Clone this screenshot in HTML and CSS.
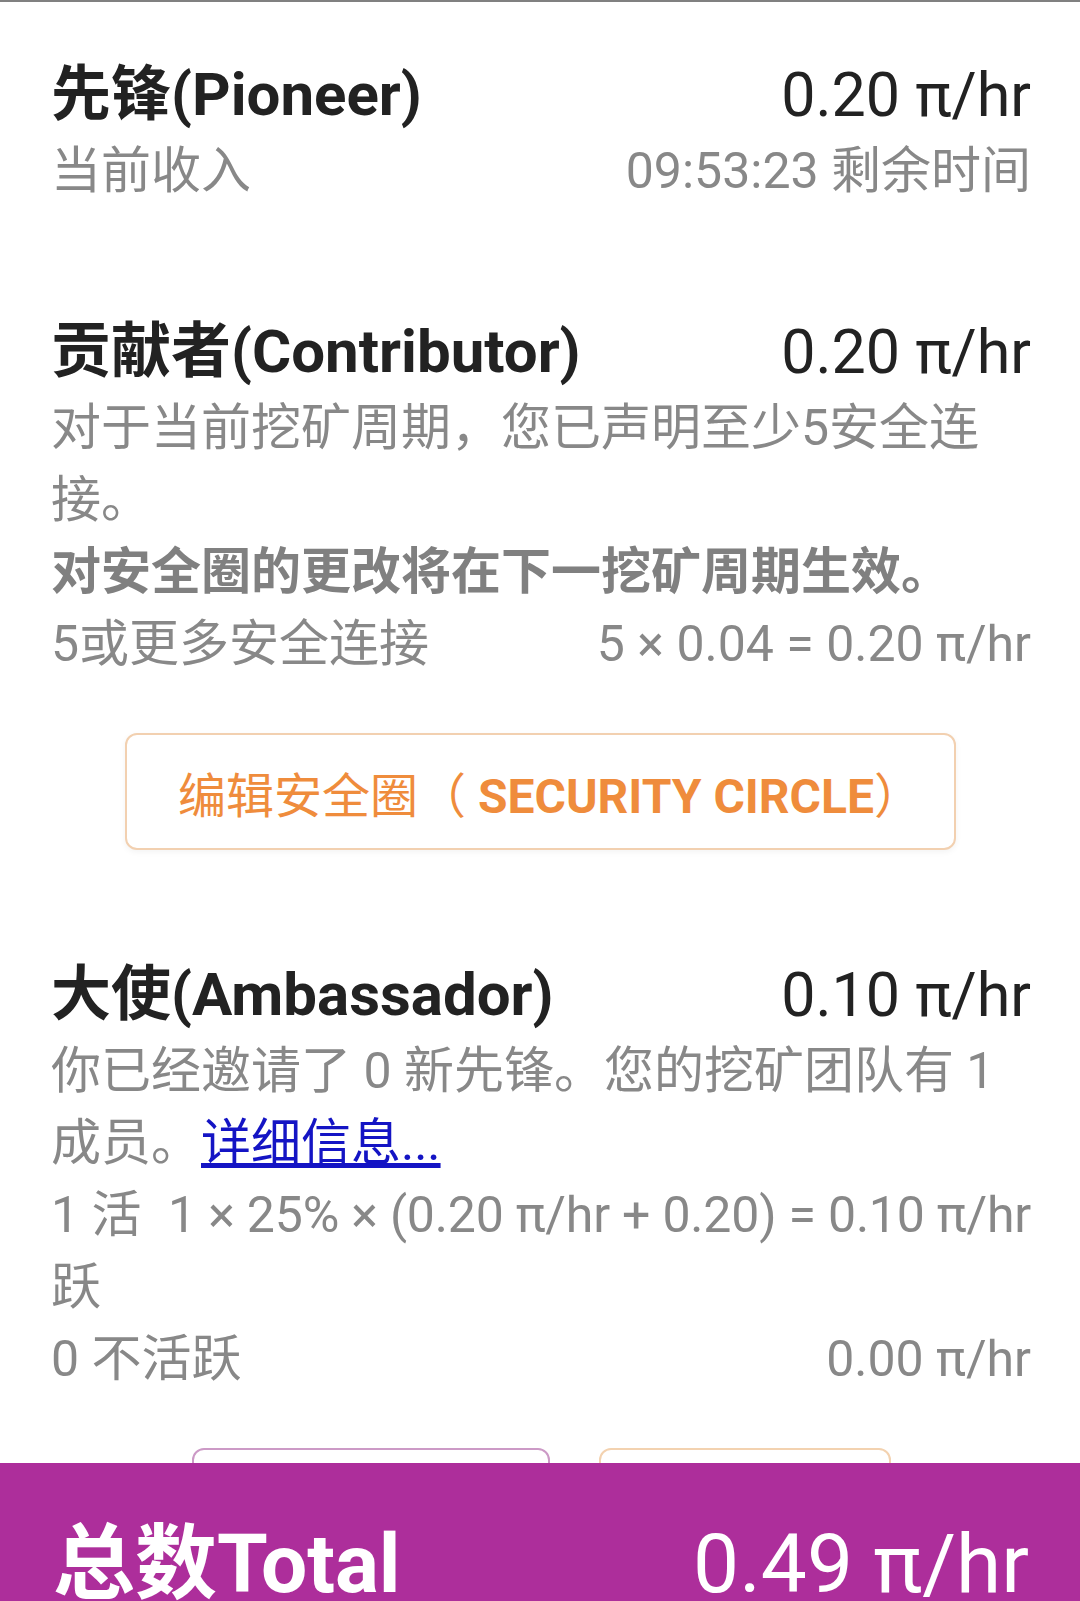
FILE: index.html
```html
<!DOCTYPE html>
<html lang="zh-CN">
<head>
    <meta charset="UTF-8">
    <meta name="viewport" content="width=device-width, initial-scale=1.0">
    <title>挖矿收入</title>
    <link rel="stylesheet" href="styles.css">
</head>
<body>
    <div class="page">
        <div class="section first">
            <div class="row heading">
                <span class="role">先锋(Pioneer)</span>
                <span class="rate">0.20 π/hr</span>
            </div>
            <div class="row line">
                <span>当前收入</span>
                <span>09:53:23 剩余时间</span>
            </div>
        </div>

        <div class="section">
            <div class="row heading">
                <span class="role">贡献者(Contributor)</span>
                <span class="rate">0.20 π/hr</span>
            </div>
            <p class="text">对于当前挖矿周期，您已声明至少5安全连接。</p>
            <p class="text strong">对安全圈的更改将在下一挖矿周期生效。</p>
            <div class="row line">
                <span>5或更多安全连接</span>
                <span>5 × 0.04 = 0.20 π/hr</span>
            </div>
            <button type="button" class="btn-circle">
                <span class="cn">编辑安全圈（</span><span class="en"> SECURITY CIRCLE</span><span class="cn">）</span>
            </button>
        </div>

        <div class="section">
            <div class="row heading">
                <span class="role">大使(Ambassador)</span>
                <span class="rate">0.10 π/hr</span>
            </div>
            <p class="text">你已经邀请了 0 新先锋。您的挖矿团队有 1 成员。<a href="#">详细信息...</a></p>
            <div class="row line">
                <span class="label">1 活跃</span>
                <span class="formula">1 × 25% × (0.20 π/hr + 0.20) = 0.10 π/hr</span>
            </div>
            <div class="row line">
                <span>0 不活跃</span>
                <span>0.00 π/hr</span>
            </div>
            <div class="actions">
                <button type="button" class="btn-invite"></button>
                <button type="button" class="btn-team"></button>
            </div>
        </div>
    </div>

    <div class="total-bar">
        <span class="total-label">总数Total</span>
        <span class="total-rate">0.49 π/hr</span>
    </div>
</body>
</html>
```

FILE: styles.css
```css
body {
    margin: 0;
    padding: 0;
    background-color: #fff;
    font-family: Roboto, "Noto Sans CJK SC", sans-serif;
    border-top: 2px solid #808080;
    height: 1599px;
    overflow: hidden;
}
.page {
    padding: 0 49px 0 51px;
}
.section {
    margin-top: 105px;
}
.section.first {
    margin-top: 53px;
}
.row {
    display: flex;
    justify-content: space-between;
    align-items: flex-start;
}
.heading {
    height: 80px;
    line-height: 80px;
    font-size: 60px;
    color: #222;
}
.role {
    font-weight: bold;
}
.rate {
    font-weight: normal;
    font-size: 61px;
}
.line, .text {
    font-size: 50px;
    line-height: 72px;
    color: #888;
}
.text {
    margin: 0;
    padding-right: 30px;
}
.text.strong {
    font-weight: bold;
    color: #808080;
}
.text a {
    color: #1414c4;
    text-decoration: underline;
}
.line .label {
    flex: 1;
    min-width: 0;
}
.line .formula {
    white-space: nowrap;
    margin-left: 24px;
    letter-spacing: -0.2px;
}
.btn-circle {
    display: block;
    margin: 53px auto 0;
    width: 831px;
    height: 117px;
    border: 2px solid #f2d0b0;
    border-radius: 12px;
    background-color: #fff;
    box-shadow: 0 2px 6px rgba(0, 0, 0, 0.05);
    color: #ef8c3c;
    font-family: Roboto, "Noto Sans CJK SC", sans-serif;
    font-size: 48px;
    padding: 0 0 0 20px;
    transform: translateX(-1px);
}
.btn-circle .en {
    font-weight: bold;
}
.actions {
    display: flex;
    justify-content: center;
    gap: 49px;
    margin-top: 53px;
}
.actions button {
    height: 117px;
    border-radius: 12px;
    background-color: #fff;
    padding: 0;
}
.btn-invite {
    width: 358px;
    border: 2px solid #cc9ac6;
}
.btn-team {
    width: 292px;
    border: 2px solid #f3d2b0;
}
.total-bar {
    position: fixed;
    left: 0;
    right: 0;
    top: 1463px;
    height: 138px;
    background-color: #ad2e9b;
    color: #fff;
    display: flex;
    justify-content: space-between;
    align-items: flex-start;
    padding: 52px 51px 0 53px;
    box-sizing: border-box;
    font-size: 82px;
    line-height: 98px;
}
.total-label {
    font-weight: bold;
}
```
